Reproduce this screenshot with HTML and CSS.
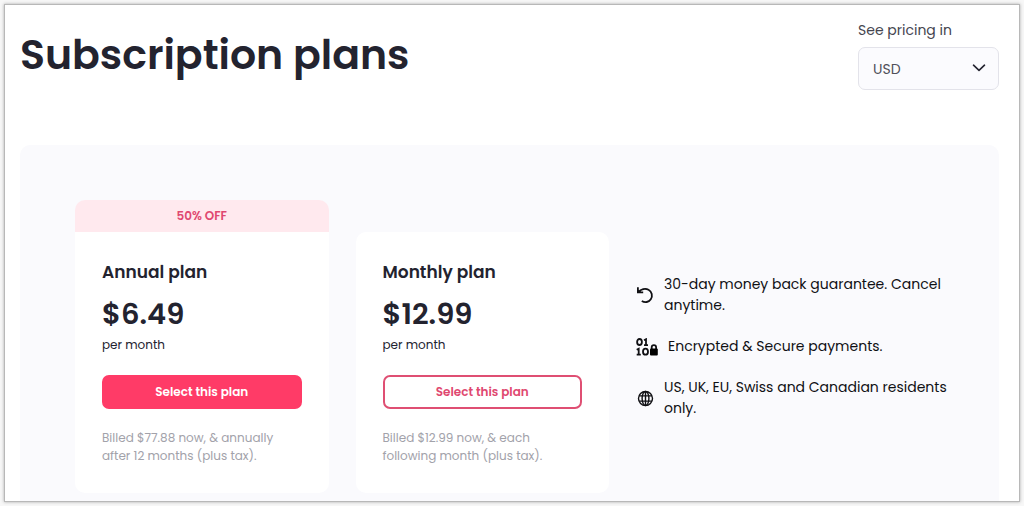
FILE: index.html
```
<!DOCTYPE html>
<html lang="en">
<head>
<meta charset="utf-8">
<meta name="viewport" content="width=device-width, initial-scale=1">
<title>Subscription plans</title>
<link rel="stylesheet" href="styles.css">
</head>
<body>
<main class="page">
  <header class="header">
    <h1>Subscription plans</h1>
    <div class="currency">
      <label for="currency">See pricing in</label>
      <div class="select-box">
        <select id="currency">
          <option>USD</option>
          <option>EUR</option>
          <option>GBP</option>
        </select>
        <svg class="chevron" viewBox="0 0 14 8" aria-hidden="true"><path d="M1.500 1.200 7 6.400l5.500-5.200"/></svg>
      </div>
    </div>
  </header>

  <section class="plans">
    <article class="plan">
      <p class="offer">50% OFF</p>
      <div class="card with-offer">
        <h2>Annual plan</h2>
        <p class="price">$6.49</p>
        <p class="period">per month</p>
        <button class="btn btn-primary" type="button">Select this plan</button>
        <p class="billing">Billed $77.88 now, &amp; annually after 12 months (plus tax).</p>
      </div>
    </article>

    <article class="plan">
      <div class="card">
        <h2>Monthly plan</h2>
        <p class="price">$12.99</p>
        <p class="period">per month</p>
        <button class="btn btn-outline" type="button">Select this plan</button>
        <p class="billing">Billed $12.99 now, &amp; each following month (plus tax).</p>
      </div>
    </article>

    <ul class="features">
      <li>
        <svg class="icon" viewBox="0 0 18 18" aria-hidden="true">
          <path class="line" d="M1.900 1.200V6.400H7.200M2.200 6.200C5 3.200 9.300 2 12.500 3.700c3.500 2 4.400 6.300 2.300 9.500C12.800 16.300 9 17 5.800 14.900"/>
        </svg>
        <span>30-day money back guarantee. Cancel anytime.</span>
      </li>
      <li>
        <svg class="icon icon-wide" viewBox="0 0 22 18" aria-hidden="true">
          <ellipse class="line" cx="3.500" cy="4" rx="2.400" ry="3"/>
          <path class="line" d="M8 2.200 10 1.200V7M8 7.100H12M.700 11.700 2.700 10.700V16.500M.700 16.700H4.800"/>
          <ellipse class="line" cx="9.500" cy="13.700" rx="2.500" ry="3"/>
          <path class="line" d="M15.700 12V9.300a2.200 2.200 0 0 1 4.400 0V12"/>
          <rect x="14" y="10.500" width="7.800" height="7" rx="1"/>
        </svg>
        <span>Encrypted &amp; Secure payments.</span>
      </li>
      <li>
        <svg class="icon" viewBox="0 0 18 18" aria-hidden="true">
          <g class="line globe">
            <circle cx="9.500" cy="9.500" r="7"/>
            <ellipse cx="9.500" cy="9.500" rx="3.400" ry="7"/>
            <path d="M3 6.900H16M3 12.100H16M9.500 2.500v14"/>
          </g>
        </svg>
        <span>US, UK, EU, Swiss and Canadian residents only.</span>
      </li>
    </ul>
  </section>
</main>
</body>
</html>
```
FILE: styles.css
```
* {
  box-sizing: border-box;
}

body {
  margin: 0;
  padding: 4px;
  background-color: #f7f7f7;
  color: #23232f;
  font-family: Poppins, Inter, "Open Sans", sans-serif;
}

h1, h2, p, ul {
  margin: 0;
  padding: 0;
}

.page {
  padding: 16px 20px 0 15px;
  border: 1px solid #b8b8b8;
  background-color: #fff;
  box-shadow: 0 0 3px #aaa;
}

.header {
  display: flex;
  justify-content: space-between;
  align-items: flex-start;
  margin-bottom: 55px;
}

h1 {
  padding-top: 6px;
  font-size: 41px;
  line-height: 56px;
  font-weight: 600;
}

.currency {
  width: 141px;
  color: #45454f;
  font-size: 14px;
}

.currency label {
  display: block;
  margin-bottom: 8px;
  line-height: 18px;
}

.select-box {
  position: relative;
}

.select-box select {
  width: 100%;
  height: 43px;
  padding: 0 14px;
  border: 1px solid #e3e3ea;
  border-radius: 7px;
  background-color: #fbfbfe;
  color: #50505a;
  font: inherit;
  appearance: none;
}

.chevron {
  position: absolute;
  top: 17px;
  right: 13px;
  width: 14px;
  height: 8px;
  fill: none;
  stroke: #23232f;
  stroke-width: 1.6;
  stroke-linecap: round;
  stroke-linejoin: round;
  pointer-events: none;
}

.plans {
  display: grid;
  grid-template-columns: 1fr 1fr 318px;
  gap: 27px;
  padding: 55px 45px 8px 55px;
  border-radius: 10px 10px 0 0;
  background-color: #fafafd;
}

.plan {
  align-self: end;
}

.offer {
  border-radius: 10px 10px 0 0;
  background-color: #ffe9ee;
  color: #df4870;
  font-size: 12px;
  line-height: 32px;
  font-weight: 600;
  text-align: center;
}

.card {
  padding: 28px 27px;
  border-radius: 10px;
  background-color: #fff;
}

.with-offer {
  border-radius: 0 0 10px 10px;
}

h2 {
  font-size: 17px;
  line-height: 25px;
  font-weight: 600;
}

.price {
  margin-top: 9px;
  font-size: 29px;
  line-height: 40px;
  font-weight: 600;
}

.period {
  font-size: 12px;
  line-height: 21px;
}

.btn {
  width: 100%;
  height: 34px;
  margin: 20px 0;
  border: 2px solid #ff3b67;
  border-radius: 7px;
  font-family: inherit;
  font-size: 12px;
  font-weight: 600;
  cursor: pointer;
}

.btn-primary {
  background-color: #ff3b67;
  color: #fff;
}

.btn-outline {
  border-color: #df4f73;
  background-color: #fff;
  color: #df4870;
}

.billing {
  color: #a2a2aa;
  font-size: 12px;
  line-height: 18px;
}

.features {
  display: flex;
  flex-direction: column;
  align-self: center;
  gap: 20px;
  color: #101014;
  font-size: 14px;
  line-height: 21px;
  list-style: none;
}

.features li {
  display: flex;
  align-items: center;
  gap: 10px;
}

.icon {
  flex: none;
  width: 18px;
  height: 18px;
}

.icon-wide {
  width: 22px;
}

.line {
  fill: none;
  stroke: #101014;
  stroke-width: 1.8;
}

.globe {
  stroke-width: 1.4;
}
```
